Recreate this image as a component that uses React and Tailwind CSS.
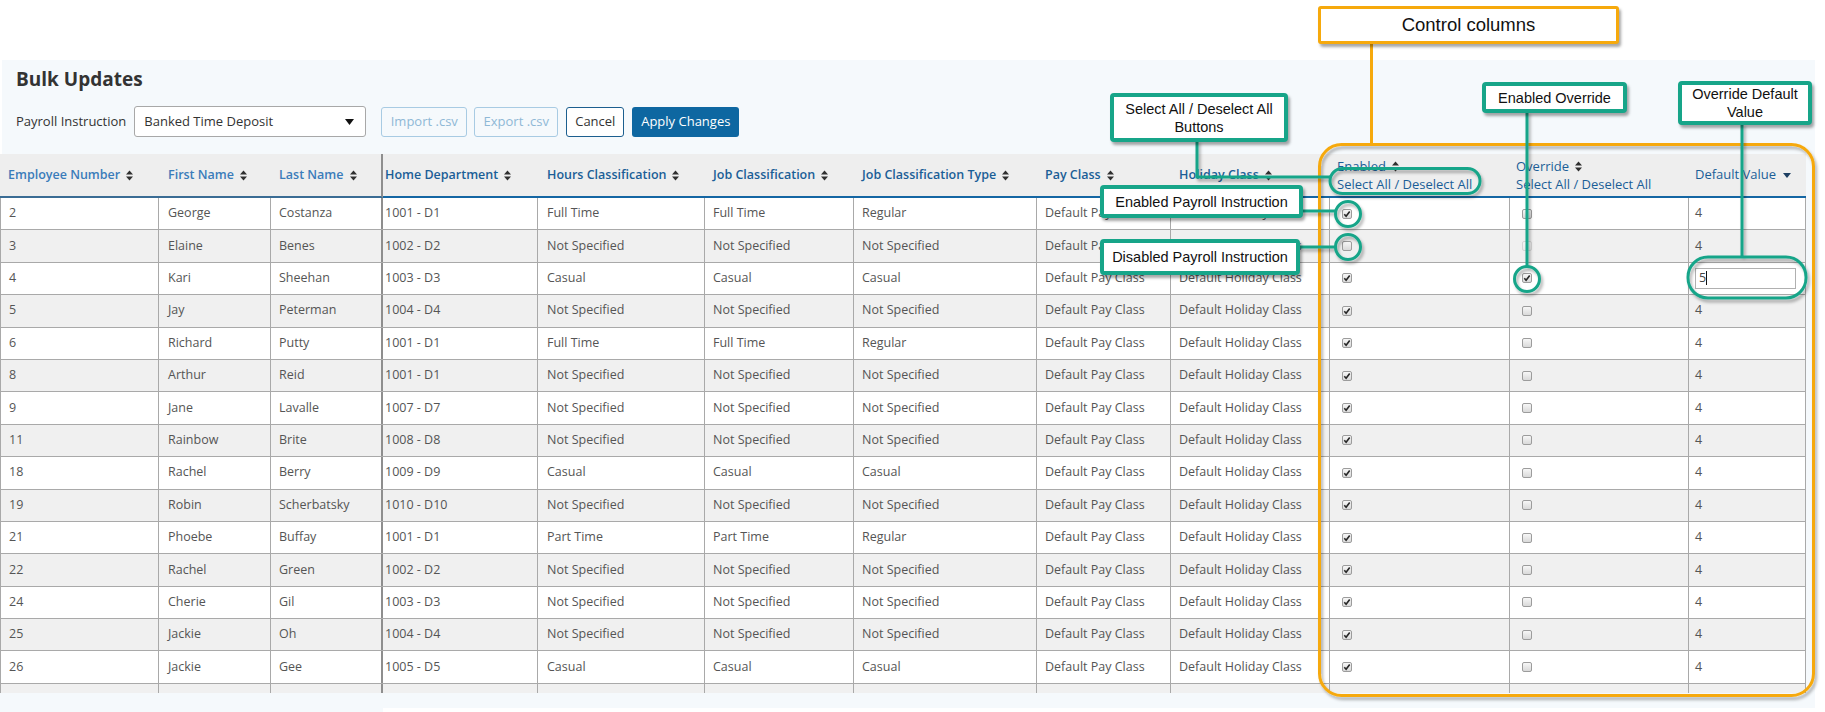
import React from "react";

const colW = [
  "w-[159px]",
  "w-[112px]",
  "w-[112px]",
  "w-[155px]",
  "w-[167px]",
  "w-[149px]",
  "w-[183px]",
  "w-[134px]",
  "w-[159px]",
  "w-[180px]",
  "w-[179px]",
  "w-[117px]",
];

const colPad = [
  "pl-[8px]",
  "pl-[9px]",
  "pl-[8px]",
  "pl-[2px]",
  "pl-[9px]",
  "pl-[8px]",
  "pl-[8px]",
  "pl-[8px]",
  "pl-[8px]",
  "pl-[12px]",
  "pl-[12px]",
  "pl-[6px]",
];

const colBorder = (i) =>
  i === 2
    ? "border-r-2 border-[#8e8e8e]"
    : i === 0
    ? "border-l border-r border-[#a9a9a9]"
    : "border-r border-[#a9a9a9]";

const headers = [
  "Employee Number",
  "First Name",
  "Last Name",
  "Home Department",
  "Hours Classification",
  "Job Classification",
  "Job Classification Type",
  "Pay Class",
  "Holiday Class",
];

const NS = "Not Specified";
const employees = [
  ["2", "George", "Costanza", "1001 - D1", "Full Time", "Full Time", "Regular"],
  ["3", "Elaine", "Benes", "1002 - D2", NS, NS, NS],
  ["4", "Kari", "Sheehan", "1003 - D3", "Casual", "Casual", "Casual"],
  ["5", "Jay", "Peterman", "1004 - D4", NS, NS, NS],
  ["6", "Richard", "Putty", "1001 - D1", "Full Time", "Full Time", "Regular"],
  ["8", "Arthur", "Reid", "1001 - D1", NS, NS, NS],
  ["9", "Jane", "Lavalle", "1007 - D7", NS, NS, NS],
  ["11", "Rainbow", "Brite", "1008 - D8", NS, NS, NS],
  ["18", "Rachel", "Berry", "1009 - D9", "Casual", "Casual", "Casual"],
  ["19", "Robin", "Scherbatsky", "1010 - D10", NS, NS, NS],
  ["21", "Phoebe", "Buffay", "1001 - D1", "Part Time", "Part Time", "Regular"],
  ["22", "Rachel", "Green", "1002 - D2", NS, NS, NS],
  ["24", "Cherie", "Gil", "1003 - D3", NS, NS, NS],
  ["25", "Jackie", "Oh", "1004 - D4", NS, NS, NS],
  ["26", "Jackie", "Gee", "1005 - D5", "Casual", "Casual", "Casual"],
];

const SortIcon = () => (
  <svg width="7" height="11" viewBox="0 0 7 11" className="ml-[6px] shrink-0">
    <path d="M0 4.6 L3.5 0.4 L7 4.6 Z" fill="#2f2f2f" />
    <path d="M0 6.4 L7 6.4 L3.5 10.6 Z" fill="#2f2f2f" />
  </svg>
);

const Checkbox = ({ checked, faded }) => (
  <span
    className={`w-[10px] h-[10px] rounded-[2px] border flex items-center justify-center bg-linear-to-b ${
      faded
        ? "border-[#d6d6d6] from-[#f6f6f6] to-[#ececec]"
        : "border-[#9c9c9c] from-[#f7f7f7] to-[#d9d9d9]"
    }`}
  >
    {checked && (
      <svg width="8" height="8" viewBox="0 0 8 8">
        <path d="M1.3 4.3 L3.1 6.2 L6.7 1.4" stroke="#262626" strokeWidth="1.6" fill="none" />
      </svg>
    )}
  </span>
);

const Callout = ({ className, children }) => (
  <div
    className={`absolute bg-white border-[4px] border-[#17a589] rounded-[4px] shadow-[2px_3px_3px_rgba(0,0,0,0.35)] flex items-center justify-center text-center text-[14.5px] leading-[18px] text-[#111] font-['Liberation_Sans',Arial,sans-serif] ${className}`}
  >
    {children}
  </div>
);

const App = () => {
  return (
    <div className="relative w-[1825px] h-[712px] overflow-hidden bg-white font-['Open_Sans',sans-serif]">
      <div className="h-[60px]" />

      {/* title + toolbar */}
      <div className="ml-[2px] w-[1813px] h-[94px] bg-[#f5f9fc] pl-[14px] pt-[6px]">
        <h1 className="h-[26px] text-[19px] leading-[26px] font-bold text-[#333]">Bulk Updates</h1>
        <div className="mt-[14px] flex items-center h-[31px]">
          <span className="text-[13px] text-[#333] mr-[8px]">Payroll Instruction</span>
          <div className="w-[232px] h-[31px] bg-white border border-[#a8a8a8] rounded-[3px] flex items-center justify-between pl-[9px] pr-[11px] text-[13px] text-[#333]">
            Banked Time Deposit
            <svg width="9" height="6" viewBox="0 0 9 6">
              <path d="M0 0 L9 0 L4.5 6 Z" fill="#111" />
            </svg>
          </div>
          <button className="ml-[15px] w-[86px] h-[30px] border border-[#a8cbe3] rounded-[3px] text-[13px] text-[#8fb8d6] bg-transparent">
            Import .csv
          </button>
          <button className="ml-[7px] w-[84px] h-[30px] border border-[#a8cbe3] rounded-[3px] text-[13px] text-[#8fb8d6] bg-transparent">
            Export .csv
          </button>
          <button className="ml-[8px] w-[58px] h-[30px] border border-[#1c5f8f] rounded-[3px] text-[13px] text-[#333] bg-white">
            Cancel
          </button>
          <button className="ml-[8px] w-[107px] h-[30px] rounded-[3px] text-[13px] text-white bg-[#0e67a1]">
            Apply Changes
          </button>
        </div>
      </div>

      {/* table */}
      <div className="flex w-[1815px] h-[539px] bg-[#f5f9fc]">
        <div className="w-[1806px] h-full overflow-hidden bg-white">
          <div className="flex h-[44px] bg-[#eeeeee]">
            {headers.map((h, i) => (
              <div
                key={h}
                className={`${colW[i]} ${colPad[i]} h-full flex items-center text-[12.5px] font-semibold border-b-2 ${
                  i < 3 ? "text-[#3a7cba] border-[#3a6c94]" : "text-[#1b5e97] border-[#1466a3]"
                } ${i === 2 ? "border-r-2 border-r-[#8e8e8e]" : ""}`}
              >
                {h}
                <SortIcon />
              </div>
            ))}
            <div className={`${colW[9]} pl-[7px] h-full flex flex-col justify-center text-[13px] text-[#1b5e97] border-b-2 border-[#1466a3] leading-[18px]`}>
              <span className="flex items-center">
                Enabled
                <SortIcon />
              </span>
              <span>Select All / Deselect All</span>
            </div>
            <div className={`${colW[10]} pl-[6px] h-full flex flex-col justify-center text-[13px] text-[#1b5e97] border-b-2 border-[#1466a3] leading-[18px]`}>
              <span className="flex items-center">
                Override
                <SortIcon />
              </span>
              <span>Select All / Deselect All</span>
            </div>
            <div className={`${colW[11]} pl-[6px] h-full flex items-center text-[13px] text-[#1b5e97] border-b-2 border-[#1466a3]`}>
              Default Value
              <svg width="8" height="5" viewBox="0 0 8 5" className="ml-[7px]">
                <path d="M0 0 L8 0 L4 5 Z" fill="#1d3f62" />
              </svg>
            </div>
          </div>

          {[...employees, null].map((row, r) => (
            <div
              key={r}
              className={`flex h-[32.4px] border-b border-[#a9a9a9] text-[12.5px] text-[#555] ${
                r % 2 === 0 ? "bg-white" : "bg-[#f0f0f0]"
              }`}
            >
              {colW.map((w, i) => (
                <div key={i} className={`${w} ${colPad[i]} ${colBorder(i)} h-full flex items-center whitespace-nowrap overflow-hidden`}>
                  {row && i < 7 && row[i]}
                  {row && i === 7 && "Default Pay Class"}
                  {row && i === 8 && "Default Holiday Class"}
                  {row && i === 9 && <Checkbox checked={r !== 1} />}
                  {row && i === 10 && <Checkbox checked={r === 2} faded={r === 1} />}
                  {row && i === 11 &&
                    (r === 2 ? (
                      <div className="w-[101px] h-[21px] border border-[#b0b0b0] bg-white flex items-center pl-[3px] text-[#444]">
                        5<span className="w-px h-[14px] bg-[#111]" />
                      </div>
                    ) : (
                      "4"
                    ))}
                </div>
              ))}
            </div>
          ))}
        </div>
      </div>
      <div className="flex">
        <div className="w-[383px] h-[19px] bg-[#f5f9fc]" />
        <div className="w-[1432px] h-[15px] bg-[#f5f9fc]" />
      </div>

      {/* annotation lines and highlights */}
      <svg className="absolute left-0 top-0 pointer-events-none" width="1825" height="712" viewBox="0 0 1825 712">
        <defs>
          <filter id="sh" x="-10%" y="-10%" width="120%" height="120%">
            <feDropShadow dx="2" dy="3" stdDeviation="1.6" floodColor="#000" floodOpacity="0.3" />
          </filter>
        </defs>
        <line x1="1371.5" y1="42" x2="1371.5" y2="145" stroke="#f6a90c" strokeWidth="3" />
        <rect x="1319.5" y="144.5" width="494" height="551" rx="22" fill="none" stroke="#f6a90c" strokeWidth="3" filter="url(#sh)" />

        <g stroke="#17a589" strokeWidth="3" fill="none" filter="url(#sh)">
          <polyline points="1197,140 1197,177 1330,177" />
          <rect x="1330" y="168.5" width="150" height="25" rx="12.5" />
          <line x1="1301" y1="211" x2="1336" y2="211" />
          <circle cx="1348" cy="214" r="12.5" />
          <line x1="1298" y1="247" x2="1335" y2="247" />
          <circle cx="1348" cy="247" r="12.5" />
          <line x1="1527" y1="111" x2="1527" y2="266" />
          <circle cx="1527" cy="279" r="12.5" />
          <line x1="1742" y1="123" x2="1742" y2="257" />
          <rect x="1688" y="257" width="118" height="41" rx="20" />
        </g>
      </svg>

      {/* callouts */}
      <div className="absolute left-[1318px] top-[6px] w-[301px] h-[38px] bg-white border-[3px] border-[#f6a90c] rounded-[3px] shadow-[2px_3px_3px_rgba(0,0,0,0.35)] flex items-center justify-center text-[18.5px] text-[#111] font-['Liberation_Sans',Arial,sans-serif]">
        Control columns
      </div>
      <Callout className="left-[1110px] top-[93px] w-[178px] h-[49px]">
        Select All / Deselect All
        <br />
        Buttons
      </Callout>
      <Callout className="left-[1100px] top-[185px] w-[203px] h-[33px]">Enabled Payroll Instruction</Callout>
      <Callout className="left-[1100px] top-[239px] w-[200px] h-[36px]">Disabled Payroll Instruction</Callout>
      <Callout className="left-[1482px] top-[82px] w-[145px] h-[31px]">Enabled Override</Callout>
      <Callout className="left-[1678px] top-[81px] w-[134px] h-[44px]">
        Override Default
        <br />
        Value
      </Callout>
    </div>
  );
};

export default App;
